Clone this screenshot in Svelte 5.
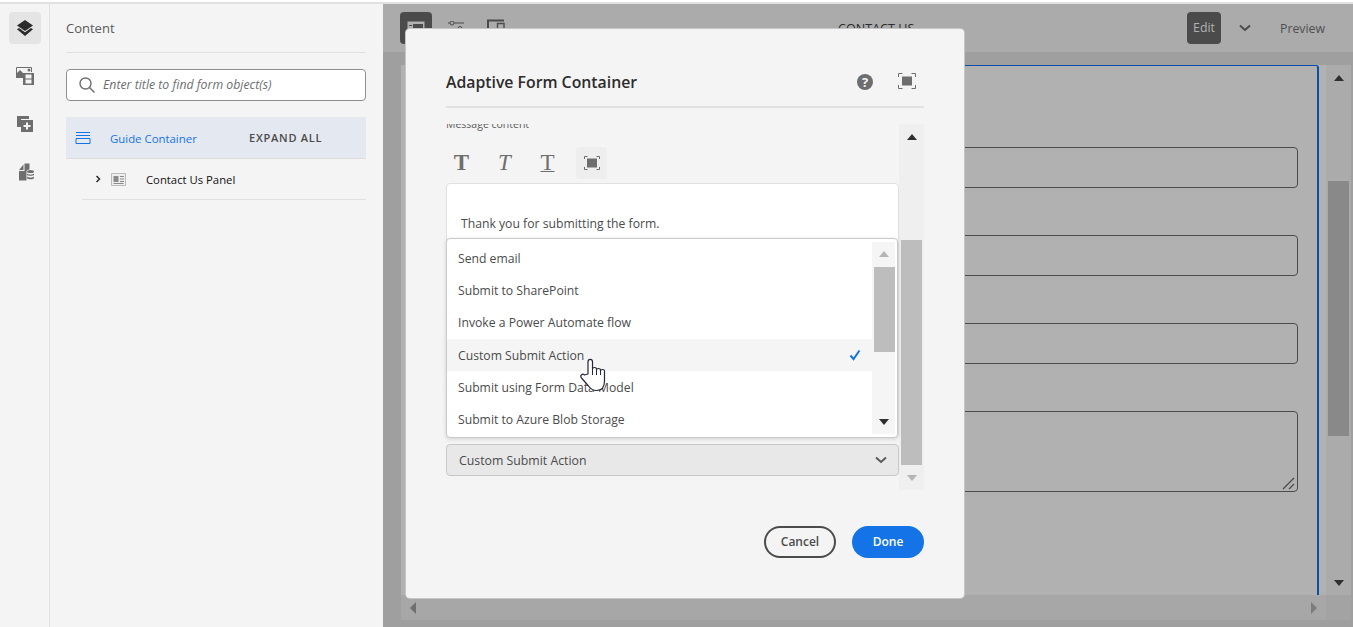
<script>
  const options = [
    'Send email',
    'Submit to SharePoint',
    'Invoke a Power Automate flow',
    'Custom Submit Action',
    'Submit using Form Data Model',
    'Submit to Azure Blob Storage'
  ];
  const selected = 'Custom Submit Action';
  const fields = [41, 41, 41, 81];
</script>

<div class="page">
  <nav class="rail">
    <button class="rail-btn active" aria-label="Content">
      <svg width="18" height="18" viewBox="0 0 18 18"><path d="M9 1 17 6.500 9 12 1 6.500Z" fill="#2c2c2c"/><path d="M1 10.200 3 9 9 13.200 15 9l2 1.200L9 17Z" fill="#2c2c2c"/></svg>
    </button>
    <button class="rail-btn" aria-label="Assets">
      <svg width="18" height="18" viewBox="0 0 18 18"><path d="M.5 8V.5h15V5" fill="none" stroke="#6e6e6e"/><path d="M0 11V7l4-4 3 3v5Z" fill="#6e6e6e"/><circle cx="13" cy="3" r="1.500" fill="#6e6e6e"/><path d="M7 6h11v12H7Z" fill="#6e6e6e"/><path d="M9.500 7.500h6v4h-6ZM9.500 12.500h6v4h-6Z" fill="#f4f4f4"/></svg>
    </button>
    <button class="rail-btn" aria-label="Components">
      <svg width="18" height="18" viewBox="0 0 18 18"><path d="M1 1h12v3H5v8H1Z" fill="#6e6e6e"/><path d="M5 5h12v12H5Z" fill="#6e6e6e"/><path d="M11 7.500v7M7.500 11h7" stroke="#f4f4f4" stroke-width="2"/></svg>
    </button>
    <button class="rail-btn" aria-label="Data sources">
      <svg width="18" height="18" viewBox="0 0 18 18"><path d="M3 7 7.500 1.500V7Z" fill="#6e6e6e"/><path d="M8.500.500h5v6c-2 .3-3 1-3 2v9H3V8h5.500Z" fill="#6e6e6e"/><ellipse cx="14.500" cy="8.500" rx="3.500" ry="1.600" fill="#6e6e6e"/><path d="M11 10.500V12c0 1 7 1 7 0v-1.500c-1 1.300-6 1.300-7 0ZM11 13.400v1.500c0 1.700 7 1.700 7 0v-1.500c-1 1.300-6 1.300-7 0Z" fill="#6e6e6e"/></svg>
    </button>
  </nav>

  <aside class="panel">
    <h2>Content</h2>
    <div class="search">
      <svg width="18" height="18" viewBox="0 0 18 18" fill="none" stroke="#6e6e6e" stroke-width="1.400"><circle cx="7.500" cy="7.500" r="5.500"/><path d="m11.500 11.500 5 5"/></svg>
      <span>Enter title to find form object(s)</span>
    </div>
    <div class="tree-head">
      <svg width="16" height="14" viewBox="0 0 16 14" fill="none" stroke="#1473e6"><path d="M1 1.500h14M1 4.500h14"/><path d="M1 7.500h14v5H1Z"/></svg>
      <span class="guide">Guide Container</span>
      <span class="expand">EXPAND ALL</span>
    </div>
    <div class="tree-row">
      <svg width="8" height="8" viewBox="0 0 8 8" fill="none" stroke="#2c2c2c" stroke-width="1.500"><path d="m2.500 1 3 3-3 3"/></svg>
      <svg class="panel-ico" width="15" height="13" viewBox="0 0 15 13"><path d="M.5.500h14v12H.5Z" fill="#eee" stroke="#bbb"/><path d="M2.500 3h5v6h-5Z" fill="#8a8a8a"/><path d="M9 3.500h4M9 6h4M9 8.500h4M2.500 10.500h10" stroke="#8a8a8a"/></svg>
      <span>Contact Us Panel</span>
    </div>
  </aside>

  <main class="main">
    <header class="toolbar">
      <div class="tools">
        <button class="tool dark" aria-label="Form">
          <svg width="18" height="14" viewBox="0 0 18 14"><path d="M.5.500h17v13H.5Z" fill="#b0b0b0"/><path d="M6 3h10v9H6Z" fill="#4b4b4b"/><path d="M2 4.500h3M2 7.500h3" stroke="#4b4b4b"/></svg>
        </button>
        <button class="tool" aria-label="Properties">
          <svg width="18" height="14" viewBox="0 0 18 14" fill="none" stroke="#4b4b4b"><path d="M1 2h16M1 7.500h16"/><circle cx="5" cy="2" r="2" fill="#ababab"/><circle cx="13" cy="7.500" r="2" fill="#ababab"/></svg>
        </button>
        <button class="tool" aria-label="Layout">
          <svg width="18" height="20" viewBox="0 0 18 20" fill="none" stroke="#4b4b4b" stroke-width="2"><path d="M1 11V2.500h16"/><path d="M10.500 5.500h6.500v12h-6.500Z" stroke-width="1.400"/></svg>
        </button>
      </div>
      <div class="page-title">CONTACT US</div>
      <div class="modes">
        <span class="edit">Edit</span>
        <svg width="12" height="8" viewBox="0 0 12 8" fill="none" stroke="#4b4b4b" stroke-width="2"><path d="m1 1.500 5 4.500 5-4.500"/></svg>
        <span class="preview">Preview</span>
      </div>
    </header>

    <div class="work">
      <div class="canvas-grid">
        <div class="canvas-wrap">
          <div class="canvas">
            {#each fields as h}
              <div class="field" style="height: {h}px">
                {#if h > 41}
                  <svg class="grip" width="14" height="14" viewBox="0 0 14 14" stroke="#4b4b4b" stroke-width="1.300"><path d="m1 13 11-11M7 13l5-5"/></svg>
                {/if}
              </div>
            {/each}
          </div>
        </div>
        <div class="vbar">
          <i class="up"></i>
          <div class="vthumb"></div>
          <i class="down"></i>
        </div>
        <div class="hbar">
          <i class="left"></i>
          <i class="right"></i>
        </div>
        <div class="corner"></div>
      </div>
    </div>
  </main>

  <div class="dialog" role="dialog">
    <div class="dlg-head">
      <h1>Adaptive Form Container</h1>
      <svg width="18" height="18" viewBox="0 0 18 18"><circle cx="9" cy="9" r="8" fill="#6e6e6e"/><text x="9" y="13.500" text-anchor="middle" class="qmark">?</text></svg>
      <svg class="dlg-full" width="18" height="16" viewBox="0 0 18 16"><path d="M.5 4V.500h4M13.500.500h4V4M17.500 12v3.500h-4M4.500 15.500h-4V12" fill="none" stroke="#6e6e6e"/><path d="M4 3.500h10v9H4Z" fill="#6e6e6e"/></svg>
    </div>

    <div class="scroller">
      <div class="scroll-body">
        <div class="msg-label">Message content</div>
        <div class="rte-tools">
          <span class="t bold">T</span>
          <span class="t italic">T</span>
          <span class="t under">T</span>
          <span class="rte-full">
            <svg width="16" height="14" viewBox="0 0 16 14"><path d="M.5 3V.500h3M12.500.500h3V3M15.500 11v2.500h-3M3.500 13.500h-3V11" fill="none" stroke="#6e6e6e"/><path d="M3 2.500h10v9H3Z" fill="#6e6e6e"/></svg>
          </span>
        </div>
        <div class="editor">Thank you for submitting the form.</div>
        <div class="select">
          <span>{selected}</span>
          <svg width="12" height="8" viewBox="0 0 12 8" fill="none" stroke="#5a5a5a" stroke-width="2"><path d="m1 1.500 5 4.500 5-4.500"/></svg>
        </div>
      </div>
      <div class="dlg-bar">
        <i class="up"></i>
        <div class="dlg-thumb"></div>
        <i class="down light"></i>
      </div>
    </div>

    <div class="actions">
      <button class="btn cancel">Cancel</button>
      <button class="btn done">Done</button>
    </div>

    <div class="popover">
      <ul>
        {#each options as opt}
          <li class:sel={opt === selected}>
            <span>{opt}</span>
            {#if opt === selected}
              <svg width="12" height="12" viewBox="0 0 12 12" fill="none" stroke="#1473e6" stroke-width="2"><path d="m1.500 6.500 3 3.500 6-8.500"/></svg>
            {/if}
          </li>
        {/each}
      </ul>
      <div class="pop-bar">
        <i class="up light"></i>
        <div class="pop-thumb"></div>
        <i class="down"></i>
      </div>
    </div>
  </div>

  <svg class="cursor" width="40" height="55" viewBox="0 0 40 55">
    <path d="M18 34V22c0-3.500 4.500-3.500 4.500 0v7c0-2 4-2 4 0v1c0-2 4-2 4 0v1c0-2 4-2 4 0v10c0 6-3 9.500-8 9.500-4 0-6-1.500-8-4.500l-7-8c-2-2.500 1-5 3-3Z" fill="#fff" stroke="#26263a" stroke-width="1.200" stroke-linejoin="round"/>
    <path d="M22.500 29v6M26.500 30v5M30.500 31v4" stroke="#26263a" stroke-width="1" fill="none"/>
  </svg>
</div>

<style>
  :global(body) {
    margin: 0;
    background: #fff;
    font-family: "Open Sans", "Noto Sans", sans-serif;
  }
  .page {
    position: relative;
    display: flex;
    width: 1353px;
    height: 627px;
    overflow: hidden;
    box-sizing: border-box;
    padding-top: 4px;
    border-top: 2px solid #fff;
    background: #e1e1e1;
  }
  .page > * {
    margin-top: -2px;
  }
  button {
    font-family: inherit;
    border: 0;
    padding: 0;
    background: none;
  }
  .rail {
    flex: none;
    width: 50px;
    box-sizing: border-box;
    border-right: 1px solid #e1e1e1;
    background: #f4f4f4;
    display: flex;
    flex-direction: column;
    align-items: center;
    gap: 16px;
    padding: 8px 0 0 1px;
  }
  .rail-btn {
    width: 32px;
    height: 32px;
    border-radius: 4px;
    display: flex;
    align-items: center;
    justify-content: center;
  }
  .rail-btn.active {
    background: #e4e4e4;
  }
  .panel {
    width: 333px;
    flex: none;
    box-sizing: border-box;
    background: #f4f4f4;
    padding: 0 17px 0 16px;
  }
  .panel h2 {
    margin: 0;
    height: 48px;
    line-height: 48px;
    font-size: 13px;
    font-weight: 400;
    color: #5a5a5a;
    border-bottom: 1px solid #e1e1e1;
  }
  .search {
    margin-top: 16px;
    height: 32px;
    box-sizing: border-box;
    border: 1px solid #8e8e8e;
    border-radius: 4px;
    background: #fff;
    display: flex;
    align-items: center;
    gap: 7px;
    padding: 0 0 1px 11px;
    font-size: 12.300px;
    font-style: italic;
    color: #6e6e6e;
  }
  .tree-head {
    margin-top: 16px;
    height: 42px;
    box-sizing: border-box;
    background: #e4e9f1;
    border-bottom: 1px solid #dcdcdc;
    display: flex;
    align-items: center;
    padding-left: 9px;
    font-size: 11.400px;
  }
  .guide {
    margin-left: 19px;
    width: 139px;
    padding-top: 2px;
    color: #1473e6;
  }
  .expand {
    font-size: 11px;
    font-weight: 600;
    letter-spacing: 0.75px;
    color: #4b4b4b;
  }
  .tree-row {
    margin-left: 16px;
    height: 41px;
    box-sizing: border-box;
    border-bottom: 1px solid #e1e1e1;
    display: flex;
    align-items: center;
    padding-left: 12px;
    font-size: 11.300px;
    color: #111;
  }
  .panel-ico {
    margin-left: 9px;
    margin-right: 20px;
  }
  .main {
    flex: 1;
    display: flex;
    flex-direction: column;
    background: #9f9f9f;
  }
  .toolbar {
    height: 48px;
    flex: none;
    background: #ababab;
    display: flex;
    align-items: center;
    padding: 0 28px 0 17px;
  }
  .tools {
    display: flex;
    gap: 8px;
  }
  .tool {
    width: 32px;
    height: 32px;
    border-radius: 4px;
    display: flex;
    align-items: center;
    justify-content: center;
  }
  .tool.dark {
    background: #4b4b4b;
  }
  .page-title {
    margin-left: 326px;
    font-size: 12.600px;
    color: #2c2c2c;
    white-space: nowrap;
    flex: 1;
  }
  .modes {
    display: flex;
    align-items: center;
    font-size: 12.300px;
  }
  .edit {
    background: #4b4b4b;
    color: #b1b1b1;
    width: 34px;
    height: 32px;
    line-height: 32px;
    text-align: center;
    border-radius: 4px;
    margin-right: 18px;
  }
  .preview {
    margin-left: 29px;
    color: #4f4f4f;
  }
  .work {
    flex: 1;
    padding: 13px 2px 7px 18px;
    min-height: 0;
    display: flex;
  }
  .canvas-grid {
    flex: 1;
    display: grid;
    grid-template-columns: 1fr 25px;
    grid-template-rows: 1fr 25px;
  }
  .canvas-wrap {
    background: #b1b1b1;
    padding: 0 7px 0 6px;
    display: flex;
    min-height: 0;
  }
  .canvas {
    flex: 1;
    border-top: 1px solid #0a4fa8;
    border-right: 2px solid #0a4fa8;
    border-top-right-radius: 3px;
    padding: 81px 19px 0 14px;
    display: flex;
    flex-direction: column;
    gap: 47px;
    min-height: 0;
  }
  .field {
    box-sizing: border-box;
    border: 1px solid #4b4b4b;
    border-radius: 4px;
    position: relative;
    flex: none;
  }
  .grip {
    position: absolute;
    right: 1px;
    bottom: 1px;
  }
  .vbar {
    background: #ababab;
    position: relative;
    display: flex;
    flex-direction: column;
    align-items: center;
  }
  .vthumb {
    position: absolute;
    top: 116px;
    left: 2px;
    width: 21px;
    height: 255px;
    background: #898989;
  }
  i {
    display: block;
    width: 0;
    height: 0;
  }
  .up {
    border: 5.500px solid transparent;
    border-top: 0;
    border-bottom: 6px solid #2f2f2f;
  }
  .down {
    border: 5.500px solid transparent;
    border-bottom: 0;
    border-top: 6px solid #2f2f2f;
  }
  .up.light {
    border-bottom-color: #b5b5b5;
  }
  .down.light {
    border-top-color: #b5b5b5;
  }
  .vbar .up {
    margin-top: 10px;
  }
  .vbar .down {
    position: absolute;
    bottom: 9px;
  }
  .hbar {
    background: #a7a7a7;
    display: flex;
    align-items: center;
    justify-content: space-between;
    padding: 0 9px;
  }
  .left {
    border: 6px solid transparent;
    border-left: 0;
    border-right: 6px solid #6f6f6f;
  }
  .right {
    border: 6px solid transparent;
    border-right: 0;
    border-left: 6px solid #7c7c7c;
  }
  .corner {
    background: #a3a3a3;
  }
  .dialog {
    position: absolute;
    left: 406px;
    top: 27px;
    width: 558px;
    height: 569px;
    margin: 0;
    box-sizing: border-box;
    background: #f4f4f4;
    border-radius: 4px;
    box-shadow: 0 0 0 1px #c6c6c6;
    padding: 0 40px;
    display: flex;
    flex-direction: column;
    color: #4b4b4b;
  }
  .dlg-head {
    height: 79px;
    flex: none;
    box-sizing: border-box;
    border-bottom: 2px solid #e1e1e1;
    padding-top: 42px;
    display: flex;
    align-items: flex-start;
  }
  .dlg-head h1 {
    margin: 0;
    flex: 1;
    font-size: 15.800px;
    line-height: 22px;
    font-weight: 600;
    color: #2c2c2c;
  }
  .dlg-head svg {
    margin-top: 2px;
  }
  .dlg-full {
    margin-left: 24px;
    margin-right: 8px;
  }
  .qmark {
    font-size: 13px;
    font-weight: 700;
    fill: #f4f4f4;
  }
  .scroller {
    margin-top: 16px;
    height: 366px;
    flex: none;
    display: flex;
    overflow: hidden;
  }
  .scroll-body {
    width: 453px;
    flex: none;
    overflow: hidden;
  }
  .msg-label {
    margin-top: -7px;
    font-size: 10.500px;
    line-height: 15px;
    color: #5a5a5a;
    height: 17px;
  }
  .rte-tools {
    margin-top: 13px;
    display: flex;
    align-items: center;
    height: 32px;
    padding-left: 5px;
  }
  .t {
    font-family: "Liberation Serif", serif;
    font-size: 23px;
    line-height: 32px;
    color: #6e6e6e;
    width: 21px;
    text-align: center;
    margin-right: 22px;
    font-weight: 700;
  }
  .t.italic {
    font-style: italic;
    font-weight: 400;
  }
  .t.under {
    font-weight: 400;
    text-decoration: underline;
    text-decoration-thickness: 1px;
    text-underline-offset: 1px;
    margin-right: 18px;
  }
  .rte-full {
    width: 31px;
    height: 32px;
    background: #eeeeee;
    border-radius: 4px;
    display: flex;
    align-items: center;
    justify-content: center;
  }
  .editor {
    margin-top: 4px;
    height: 255px;
    box-sizing: border-box;
    background: #fff;
    border: 1px solid #e1e1e1;
    border-radius: 4px;
    padding: 31px 14px 0;
    font-size: 12.200px;
    line-height: 18px;
    color: #4b4b4b;
  }
  .select {
    margin-top: 6px;
    height: 32px;
    box-sizing: border-box;
    border: 1px solid #c8c8c8;
    border-radius: 4px;
    background: #e8e8e8;
    display: flex;
    align-items: center;
    justify-content: space-between;
    padding: 0 11px 0 12px;
    font-size: 12.300px;
    color: #4b4b4b;
  }
  .dlg-bar {
    width: 25px;
    background: #efefef;
    position: relative;
    display: flex;
    flex-direction: column;
    align-items: center;
  }
  .dlg-bar .up {
    margin-top: 10px;
  }
  .dlg-bar .down {
    position: absolute;
    bottom: 9px;
  }
  .dlg-thumb {
    position: absolute;
    top: 116px;
    left: 2px;
    width: 21px;
    height: 225px;
    background: #bdbdbd;
  }
  .actions {
    margin-top: 36px;
    display: flex;
    justify-content: flex-end;
    gap: 16px;
  }
  .btn {
    width: 72px;
    height: 32px;
    box-sizing: border-box;
    border-radius: 16px;
    font-size: 12px;
    font-weight: 600;
    padding-bottom: 2px;
  }
  .cancel {
    border: 2px solid #4b4b4b;
    color: #4b4b4b;
  }
  .done {
    background: #1473e6;
    color: #fff;
  }
  .popover {
    position: absolute;
    left: 40px;
    top: 209px;
    width: 452px;
    height: 200px;
    box-sizing: border-box;
    background: #fff;
    border: 1px solid #cacaca;
    border-radius: 4px;
    box-shadow: 0 1px 4px rgba(0, 0, 0, 0.15);
    padding: 3px 2px 3px 0;
    display: flex;
  }
  .popover ul {
    flex: 1;
    margin: 0;
    padding: 0;
    list-style: none;
  }
  .popover li {
    height: 32.250px;
    box-sizing: border-box;
    padding: 0 11px;
    display: flex;
    align-items: center;
    justify-content: space-between;
    font-size: 12.200px;
    color: #4b4b4b;
  }
  .popover li.sel {
    background: #f5f5f5;
    padding-top: 1px;
  }
  .pop-bar {
    width: 23px;
    background: #f5f5f5;
    position: relative;
    display: flex;
    flex-direction: column;
    align-items: center;
  }
  .pop-bar .up {
    margin-top: 9px;
  }
  .pop-bar .down {
    position: absolute;
    bottom: 9px;
  }
  .pop-thumb {
    position: absolute;
    top: 25px;
    left: 2px;
    width: 21px;
    height: 85px;
    background: #bdbdbd;
  }
  .cursor {
    position: absolute;
    left: 570px;
    top: 338px;
    margin: 0;
  }
</style>
